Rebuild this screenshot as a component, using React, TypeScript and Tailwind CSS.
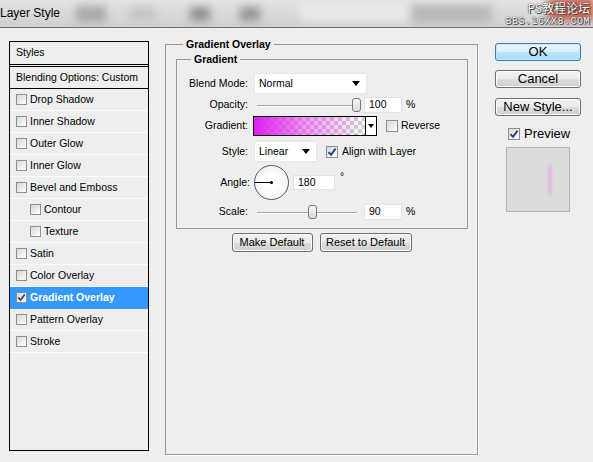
import React from "react";

const items: { label: string; indent?: boolean; checked?: boolean; selected?: boolean }[] = [
  { label: "Drop Shadow" },
  { label: "Inner Shadow" },
  { label: "Outer Glow" },
  { label: "Inner Glow" },
  { label: "Bevel and Emboss" },
  { label: "Contour", indent: true },
  { label: "Texture", indent: true },
  { label: "Satin" },
  { label: "Color Overlay" },
  { label: "Gradient Overlay", checked: true, selected: true },
  { label: "Pattern Overlay" },
  { label: "Stroke" },
];

function Check({ checked, size = 11 }: { checked?: boolean; size?: number }) {
  return (
    <span
      className="shrink-0 flex items-center justify-center border border-[#8e8f8f] bg-[linear-gradient(135deg,#d6d6d6,#ffffff)]"
      style={{ width: size, height: size }}
    >
      {checked && (
        <svg width={size - 2} height={size - 2} viewBox="0 0 10 10">
          <path d="M1.5 5.2 L4 7.8 L8.6 1.6" fill="none" stroke="#2a3f8e" strokeWidth="1.9" />
        </svg>
      )}
    </span>
  );
}

function Arrow() {
  return (
    <svg width="8" height="5" viewBox="0 0 8 5">
      <path d="M0 0 H8 L4 5 Z" fill="#000" />
    </svg>
  );
}

function Slider({ thumb }: { thumb: number }) {
  return (
    <div className="relative w-[103px] h-full">
      <div className="absolute left-0 right-[3px] top-[8px] h-[2px] border-t border-[#a7a7a7] border-b border-b-white" />
      <div
        className="absolute top-[1px] w-[9px] h-[14px] rounded-[3px] border border-[#7a7a7a] bg-[linear-gradient(#fafafa,#d8d8d8)]"
        style={{ left: thumb }}
      />
    </div>
  );
}

function Field({ value, w }: { value: string; w: number }) {
  return (
    <div
      className="h-full bg-white border border-[#e2e2e2] flex items-center pl-[4px]"
      style={{ width: w }}
    >
      {value}
    </div>
  );
}

function Btn({ children, w, primary }: { children: React.ReactNode; w: number; primary?: boolean }) {
  return (
    <div
      className={
        "flex items-center justify-center rounded-[3px] border " +
        (primary
          ? "border-[#3c7fb1] bg-[linear-gradient(#eaf6fd,#d9f0fc_50%,#bee6fd_51%,#a7d9f5)] shadow-[inset_0_0_0_1px_#c2e5f9]"
          : "border-[#707070] bg-[linear-gradient(#f2f2f2,#ebebeb_50%,#dddddd_51%,#cfcfcf)] shadow-[inset_0_0_0_1px_#fbfbfb]")
      }
      style={{ width: w }}
    >
      {children}
    </div>
  );
}

export default function App() {
  return (
    <div className="w-[593px] h-[462px] overflow-hidden bg-[#eeeeee] text-black font-['Liberation_Sans',Arial,sans-serif] text-[10.5px] flex flex-col">
      {/* title bar */}
      <div className="relative h-[28px] shrink-0 border-b border-[#6b6b6b] bg-[linear-gradient(#e4e4e4,#cfcfcf)] overflow-hidden flex items-center">
        <div className="absolute inset-0 blur-[4px]">
          <div className="absolute left-[76px] top-[6px] w-[30px] h-[16px] bg-[#a9a9a9]" />
          <div className="absolute left-[130px] top-[8px] w-[26px] h-[12px] bg-[#c2c2c2]" />
          <div className="absolute left-[190px] top-[7px] w-[20px] h-[14px] bg-[#8f8f8f]" />
          <div className="absolute left-[240px] top-[7px] w-[20px] h-[14px] bg-[#959595]" />
          <div className="absolute left-[300px] top-[2px] w-[110px] h-[20px] bg-[#e9e9e9]" />
          <div className="absolute left-[410px] top-[5px] w-[82px] h-[18px] bg-[#b9b9b9]" />
          <div className="absolute left-[548px] top-[-2px] w-[46px] h-[22px] bg-[#c9573f]" />
        </div>
        <span className="relative text-[12px] leading-none pb-[1px]">Layer Style</span>
        <div className="absolute right-[3px] top-[1px] flex flex-col items-end text-white [text-shadow:0_0_1px_#333,0_0_1px_#333,1px_1px_0_#555]">
          <span className="text-[12px] leading-[14px] font-['Noto_Sans_CJK_SC',sans-serif]">PS教程论坛</span>
          <span className="mt-[2px] text-[10px] leading-[10px] tracking-[0.5px] font-['Liberation_Mono',monospace]">BBS.16XX8.COM</span>
        </div>
      </div>

      {/* body */}
      <div className="flex items-start">
        {/* styles list */}
        <div className="ml-[9px] mt-[13px] w-[140px] h-[410px] border border-black flex flex-col">
          <div className="h-[23px] border-b border-black flex items-center pl-[6px]">Styles</div>
          <div className="mt-[1px] h-[23px] border-y border-black flex items-center pl-[6px]">
            Blending Options: Custom
          </div>
          {items.map((it) => (
            <div
              key={it.label}
              className={
                "h-[22px] border-b flex items-center gap-[3px] " +
                (it.indent ? "pl-[20px] " : "pl-[6px] ") +
                (it.selected ? "bg-[#3399ff] border-[#3399ff] text-white font-bold" : "border-[#fbfbfb]")
              }
            >
              <Check checked={it.checked} />
              <span>{it.label}</span>
            </div>
          ))}
        </div>

        {/* settings */}
        <div className="ml-[16px] mt-[10px] flex flex-col">
          <fieldset className="w-[313px] h-[417px] border border-[#9a9a9a] shadow-[1px_1px_0_#fff]">
            <legend className="ml-[17px] px-[3px] font-bold leading-[13px]">Gradient Overlay</legend>
            <fieldset className="ml-[10px] mt-[2px] w-[292px] border border-[#9a9a9a] pb-[8px]">
              <legend className="ml-[14px] px-[3px] font-bold leading-[13px]">Gradient</legend>

              <div className="mt-[7px] h-[21px] flex items-center">
                <span className="w-[71px] text-right">Blend Mode:</span>
                <div className="ml-[6px] w-[113px] h-full bg-white border border-[#e6e6e6] flex items-center justify-between pl-[4px] pr-[6px]">
                  <span>Normal</span>
                  <Arrow />
                </div>
              </div>

              <div className="mt-[3px] h-[16px] flex items-center">
                <span className="w-[71px] text-right">Opacity:</span>
                <div className="ml-[9px] h-full">
                  <Slider thumb={95} />
                </div>
                <div className="ml-[4px] h-full">
                  <Field value="100" w={38} />
                </div>
                <span className="ml-[4px] self-start">%</span>
              </div>

              <div className="mt-[3px] h-[20px] flex items-center">
                <span className="w-[71px] text-right">Gradient:</span>
                <div className="ml-[5px] w-[124px] h-full border border-black flex">
                  <div className="flex-1 relative bg-[conic-gradient(#cfcfcf_25%,#ffffff_0_50%,#cfcfcf_0_75%,#ffffff_0)] [background-size:8px_8px]">
                    <div className="absolute inset-0 bg-[linear-gradient(to_right,#dd1ff0,rgba(230,60,240,0.55)_45%,rgba(240,120,245,0)_100%)]" />
                  </div>
                  <div className="w-[11px] border-l border-black bg-white flex items-center justify-center">
                    <svg width="6" height="4" viewBox="0 0 6 4">
                      <path d="M0 0 H6 L3 4 Z" fill="#000" />
                    </svg>
                  </div>
                </div>
                <div className="ml-[9px]">
                  <Check size={12} />
                </div>
                <span className="ml-[3px]">Reverse</span>
              </div>

              <div className="mt-[5px] h-[21px] flex items-center">
                <span className="w-[71px] text-right">Style:</span>
                <div className="ml-[6px] w-[63px] h-full bg-white border border-[#e6e6e6] flex items-center justify-between pl-[4px] pr-[6px]">
                  <span>Linear</span>
                  <Arrow />
                </div>
                <div className="ml-[9px]">
                  <Check size={12} checked />
                </div>
                <span className="ml-[4px]">Align with Layer</span>
              </div>

              <div className="mt-[3px] h-[35px] flex items-center">
                <span className="w-[73px] text-right">Angle:</span>
                <div className="ml-[4px] relative w-[35px] h-[35px] rounded-full border-[1.5px] border-[#4b5b7d] bg-[radial-gradient(circle,#ffffff_30%,#ececec_100%)]">
                  <div className="absolute left-0 top-[16px] w-[16px] h-px bg-black" />
                  <div className="absolute left-[15px] top-[15px] w-[3px] h-[3px] rounded-full bg-black" />
                </div>
                <div className="ml-[4px] h-[15px]">
                  <Field value="180" w={42} />
                </div>
                <span className="ml-[5px] self-start mt-[6px] leading-none">°</span>
              </div>

              <div className="mt-[4px] h-[16px] flex items-center">
                <span className="w-[71px] text-right">Scale:</span>
                <div className="ml-[9px] h-full">
                  <Slider thumb={51} />
                </div>
                <div className="ml-[4px] h-full">
                  <Field value="90" w={38} />
                </div>
                <span className="ml-[4px] self-start">%</span>
              </div>
            </fieldset>

            <div className="mt-[4px] flex justify-center gap-[7px] h-[19px] text-[11px]">
              <Btn w={81}>Make Default</Btn>
              <Btn w={92}>Reset to Default</Btn>
            </div>
          </fieldset>
        </div>

        {/* right buttons */}
        <div className="ml-[17px] mt-[15px] flex flex-col text-[13px]">
          <div className="h-[18px] flex">
            <Btn w={86} primary>OK</Btn>
          </div>
          <div className="mt-[9px] h-[18px] flex">
            <Btn w={86}>Cancel</Btn>
          </div>
          <div className="mt-[10px] h-[18px] flex">
            <Btn w={86}>New Style...</Btn>
          </div>
          <div className="mt-[11px] h-[13px] flex items-center">
            <div className="ml-[13px]">
              <Check size={12} checked />
            </div>
            <span className="ml-[4px]">Preview</span>
          </div>
          <div className="mt-[7px] ml-[11px] w-[64px] h-[65px] border border-[#b5b5b5] bg-[#dcdcdc] flex justify-end pr-[17px] pt-[17px]">
            <div className="w-[4px] h-[30px] bg-[#e6b9e6] blur-[1px]" />
          </div>
        </div>
      </div>
    </div>
  );
}
